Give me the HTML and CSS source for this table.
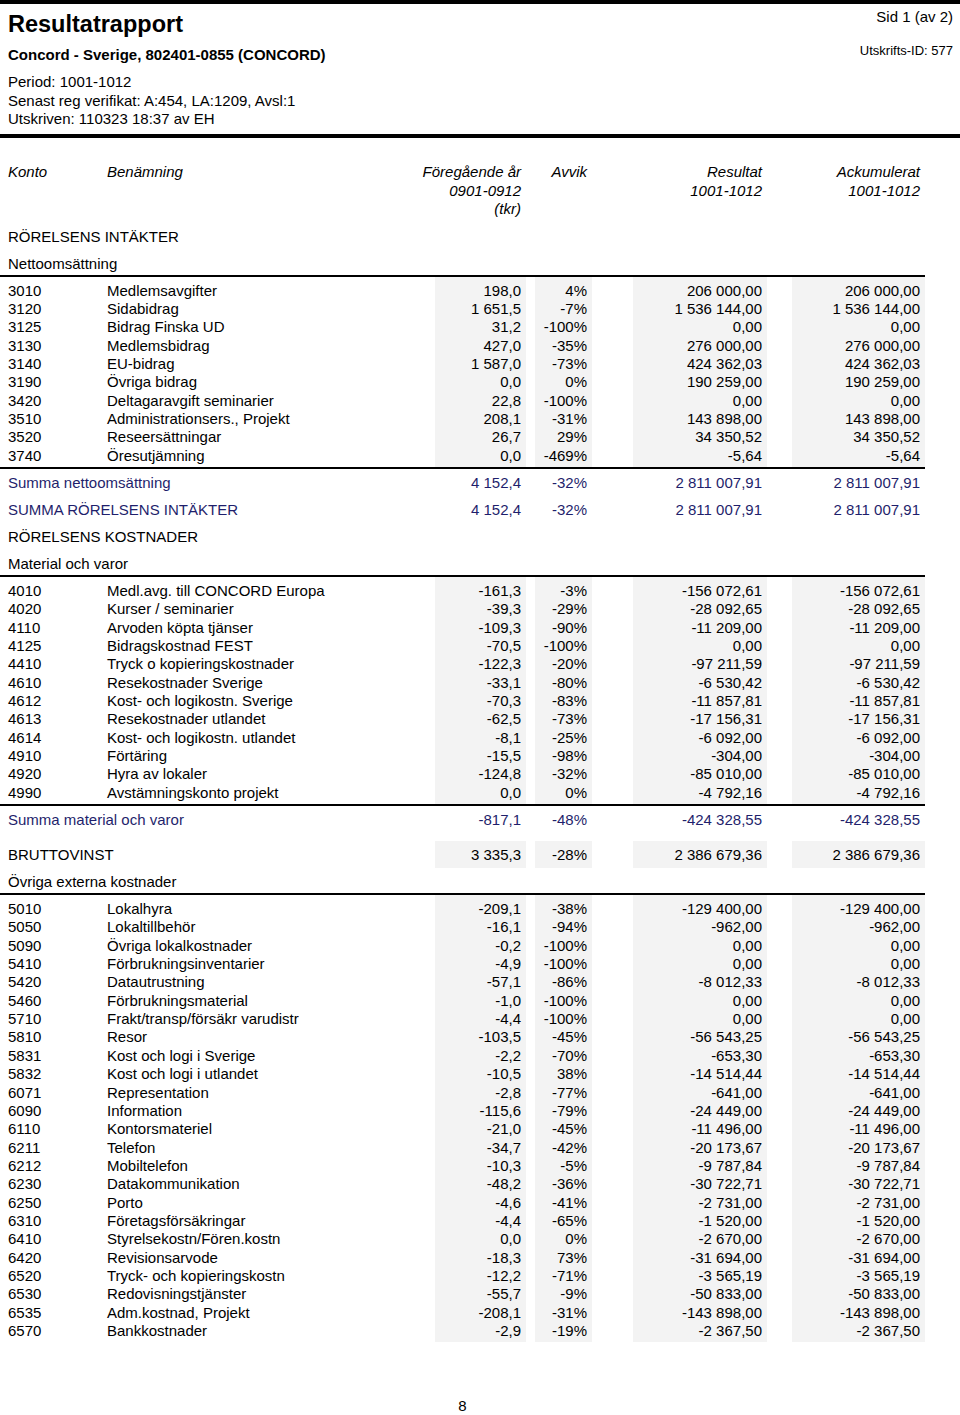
FILE: index.html
```html
<!DOCTYPE html>
<html lang="sv">
<head>
<meta charset="utf-8">
<title>Resultatrapport</title>
<link rel="stylesheet" href="styles.css">
</head>
<body>
<header class="masthead">
  <div class="mast-left">
    <h1 class="title">Resultatrapport</h1>
    <div class="company">Concord - Sverige, 802401-0855 (CONCORD)</div>
    <div class="meta">
      <div>Period: 1001-1012</div>
      <div>Senast reg verifikat: A:454, LA:1209, Avsl:1</div>
      <div>Utskriven: 110323 18:37 av EH</div>
    </div>
  </div>
  <div class="mast-right">
    <div class="pageno">Sid 1 (av 2)</div>
    <div class="printid">Utskrifts-ID: 577</div>
  </div>
</header>

<main class="report">
  <div class="row colhead">
    <div class="k">Konto</div>
    <div class="n">Benämning</div>
    <div class="p num"><span>Föregående år</span><span>0901-0912</span><span>(tkr)</span></div>
    <div class="a num"><span>Avvik</span></div>
    <div class="r num"><span>Resultat</span><span>1001-1012</span></div>
    <div class="c num"><span>Ackumulerat</span><span>1001-1012</span></div>
  </div>

  <div class="row line"><div class="label">RÖRELSENS INTÄKTER</div></div>
  <div class="row line ruled"><div class="label">Nettoomsättning</div></div>

  <div class="data">
    <div class="row"><div class="k">3010</div><div class="n">Medlemsavgifter</div><div class="p num">198,0</div><div class="a num">4%</div><div class="r num">206 000,00</div><div class="c num">206 000,00</div></div>
    <div class="row"><div class="k">3120</div><div class="n">Sidabidrag</div><div class="p num">1 651,5</div><div class="a num">-7%</div><div class="r num">1 536 144,00</div><div class="c num">1 536 144,00</div></div>
    <div class="row"><div class="k">3125</div><div class="n">Bidrag Finska UD</div><div class="p num">31,2</div><div class="a num">-100%</div><div class="r num">0,00</div><div class="c num">0,00</div></div>
    <div class="row"><div class="k">3130</div><div class="n">Medlemsbidrag</div><div class="p num">427,0</div><div class="a num">-35%</div><div class="r num">276 000,00</div><div class="c num">276 000,00</div></div>
    <div class="row"><div class="k">3140</div><div class="n">EU-bidrag</div><div class="p num">1 587,0</div><div class="a num">-73%</div><div class="r num">424 362,03</div><div class="c num">424 362,03</div></div>
    <div class="row"><div class="k">3190</div><div class="n">Övriga bidrag</div><div class="p num">0,0</div><div class="a num">0%</div><div class="r num">190 259,00</div><div class="c num">190 259,00</div></div>
    <div class="row"><div class="k">3420</div><div class="n">Deltagaravgift seminarier</div><div class="p num">22,8</div><div class="a num">-100%</div><div class="r num">0,00</div><div class="c num">0,00</div></div>
    <div class="row"><div class="k">3510</div><div class="n">Administrationsers., Projekt</div><div class="p num">208,1</div><div class="a num">-31%</div><div class="r num">143 898,00</div><div class="c num">143 898,00</div></div>
    <div class="row"><div class="k">3520</div><div class="n">Reseersättningar</div><div class="p num">26,7</div><div class="a num">29%</div><div class="r num">34 350,52</div><div class="c num">34 350,52</div></div>
    <div class="row"><div class="k">3740</div><div class="n">Öresutjämning</div><div class="p num">0,0</div><div class="a num">-469%</div><div class="r num">-5,64</div><div class="c num">-5,64</div></div>
  </div>

  <div class="row line sum"><div class="label">Summa nettoomsättning</div><div class="p num">4 152,4</div><div class="a num">-32%</div><div class="r num">2 811 007,91</div><div class="c num">2 811 007,91</div></div>
  <div class="row line sum"><div class="label">SUMMA RÖRELSENS INTÄKTER</div><div class="p num">4 152,4</div><div class="a num">-32%</div><div class="r num">2 811 007,91</div><div class="c num">2 811 007,91</div></div>
  <div class="row line"><div class="label">RÖRELSENS KOSTNADER</div></div>
  <div class="row line ruled"><div class="label">Material och varor</div></div>

  <div class="data">
    <div class="row"><div class="k">4010</div><div class="n">Medl.avg. till CONCORD Europa</div><div class="p num">-161,3</div><div class="a num">-3%</div><div class="r num">-156 072,61</div><div class="c num">-156 072,61</div></div>
    <div class="row"><div class="k">4020</div><div class="n">Kurser / seminarier</div><div class="p num">-39,3</div><div class="a num">-29%</div><div class="r num">-28 092,65</div><div class="c num">-28 092,65</div></div>
    <div class="row"><div class="k">4110</div><div class="n">Arvoden köpta tjänser</div><div class="p num">-109,3</div><div class="a num">-90%</div><div class="r num">-11 209,00</div><div class="c num">-11 209,00</div></div>
    <div class="row"><div class="k">4125</div><div class="n">Bidragskostnad FEST</div><div class="p num">-70,5</div><div class="a num">-100%</div><div class="r num">0,00</div><div class="c num">0,00</div></div>
    <div class="row"><div class="k">4410</div><div class="n">Tryck o kopieringskostnader</div><div class="p num">-122,3</div><div class="a num">-20%</div><div class="r num">-97 211,59</div><div class="c num">-97 211,59</div></div>
    <div class="row"><div class="k">4610</div><div class="n">Resekostnader Sverige</div><div class="p num">-33,1</div><div class="a num">-80%</div><div class="r num">-6 530,42</div><div class="c num">-6 530,42</div></div>
    <div class="row"><div class="k">4612</div><div class="n">Kost- och logikostn. Sverige</div><div class="p num">-70,3</div><div class="a num">-83%</div><div class="r num">-11 857,81</div><div class="c num">-11 857,81</div></div>
    <div class="row"><div class="k">4613</div><div class="n">Resekostnader utlandet</div><div class="p num">-62,5</div><div class="a num">-73%</div><div class="r num">-17 156,31</div><div class="c num">-17 156,31</div></div>
    <div class="row"><div class="k">4614</div><div class="n">Kost- och logikostn. utlandet</div><div class="p num">-8,1</div><div class="a num">-25%</div><div class="r num">-6 092,00</div><div class="c num">-6 092,00</div></div>
    <div class="row"><div class="k">4910</div><div class="n">Förtäring</div><div class="p num">-15,5</div><div class="a num">-98%</div><div class="r num">-304,00</div><div class="c num">-304,00</div></div>
    <div class="row"><div class="k">4920</div><div class="n">Hyra av lokaler</div><div class="p num">-124,8</div><div class="a num">-32%</div><div class="r num">-85 010,00</div><div class="c num">-85 010,00</div></div>
    <div class="row"><div class="k">4990</div><div class="n">Avstämningskonto projekt</div><div class="p num">0,0</div><div class="a num">0%</div><div class="r num">-4 792,16</div><div class="c num">-4 792,16</div></div>
  </div>

  <div class="row line sum"><div class="label">Summa material och varor</div><div class="p num">-817,1</div><div class="a num">-48%</div><div class="r num">-424 328,55</div><div class="c num">-424 328,55</div></div>
  <div class="row line gross"><div class="label">BRUTTOVINST</div><div class="p num">3 335,3</div><div class="a num">-28%</div><div class="r num">2 386 679,36</div><div class="c num">2 386 679,36</div></div>
  <div class="row line ruled"><div class="label">Övriga externa kostnader</div></div>

  <div class="data open">
    <div class="row"><div class="k">5010</div><div class="n">Lokalhyra</div><div class="p num">-209,1</div><div class="a num">-38%</div><div class="r num">-129 400,00</div><div class="c num">-129 400,00</div></div>
    <div class="row"><div class="k">5050</div><div class="n">Lokaltillbehör</div><div class="p num">-16,1</div><div class="a num">-94%</div><div class="r num">-962,00</div><div class="c num">-962,00</div></div>
    <div class="row"><div class="k">5090</div><div class="n">Övriga lokalkostnader</div><div class="p num">-0,2</div><div class="a num">-100%</div><div class="r num">0,00</div><div class="c num">0,00</div></div>
    <div class="row"><div class="k">5410</div><div class="n">Förbrukningsinventarier</div><div class="p num">-4,9</div><div class="a num">-100%</div><div class="r num">0,00</div><div class="c num">0,00</div></div>
    <div class="row"><div class="k">5420</div><div class="n">Datautrustning</div><div class="p num">-57,1</div><div class="a num">-86%</div><div class="r num">-8 012,33</div><div class="c num">-8 012,33</div></div>
    <div class="row"><div class="k">5460</div><div class="n">Förbrukningsmaterial</div><div class="p num">-1,0</div><div class="a num">-100%</div><div class="r num">0,00</div><div class="c num">0,00</div></div>
    <div class="row"><div class="k">5710</div><div class="n">Frakt/transp/försäkr varudistr</div><div class="p num">-4,4</div><div class="a num">-100%</div><div class="r num">0,00</div><div class="c num">0,00</div></div>
    <div class="row"><div class="k">5810</div><div class="n">Resor</div><div class="p num">-103,5</div><div class="a num">-45%</div><div class="r num">-56 543,25</div><div class="c num">-56 543,25</div></div>
    <div class="row"><div class="k">5831</div><div class="n">Kost och logi i Sverige</div><div class="p num">-2,2</div><div class="a num">-70%</div><div class="r num">-653,30</div><div class="c num">-653,30</div></div>
    <div class="row"><div class="k">5832</div><div class="n">Kost och logi i utlandet</div><div class="p num">-10,5</div><div class="a num">38%</div><div class="r num">-14 514,44</div><div class="c num">-14 514,44</div></div>
    <div class="row"><div class="k">6071</div><div class="n">Representation</div><div class="p num">-2,8</div><div class="a num">-77%</div><div class="r num">-641,00</div><div class="c num">-641,00</div></div>
    <div class="row"><div class="k">6090</div><div class="n">Information</div><div class="p num">-115,6</div><div class="a num">-79%</div><div class="r num">-24 449,00</div><div class="c num">-24 449,00</div></div>
    <div class="row"><div class="k">6110</div><div class="n">Kontorsmateriel</div><div class="p num">-21,0</div><div class="a num">-45%</div><div class="r num">-11 496,00</div><div class="c num">-11 496,00</div></div>
    <div class="row"><div class="k">6211</div><div class="n">Telefon</div><div class="p num">-34,7</div><div class="a num">-42%</div><div class="r num">-20 173,67</div><div class="c num">-20 173,67</div></div>
    <div class="row"><div class="k">6212</div><div class="n">Mobiltelefon</div><div class="p num">-10,3</div><div class="a num">-5%</div><div class="r num">-9 787,84</div><div class="c num">-9 787,84</div></div>
    <div class="row"><div class="k">6230</div><div class="n">Datakommunikation</div><div class="p num">-48,2</div><div class="a num">-36%</div><div class="r num">-30 722,71</div><div class="c num">-30 722,71</div></div>
    <div class="row"><div class="k">6250</div><div class="n">Porto</div><div class="p num">-4,6</div><div class="a num">-41%</div><div class="r num">-2 731,00</div><div class="c num">-2 731,00</div></div>
    <div class="row"><div class="k">6310</div><div class="n">Företagsförsäkringar</div><div class="p num">-4,4</div><div class="a num">-65%</div><div class="r num">-1 520,00</div><div class="c num">-1 520,00</div></div>
    <div class="row"><div class="k">6410</div><div class="n">Styrelsekostn/Fören.kostn</div><div class="p num">0,0</div><div class="a num">0%</div><div class="r num">-2 670,00</div><div class="c num">-2 670,00</div></div>
    <div class="row"><div class="k">6420</div><div class="n">Revisionsarvode</div><div class="p num">-18,3</div><div class="a num">73%</div><div class="r num">-31 694,00</div><div class="c num">-31 694,00</div></div>
    <div class="row"><div class="k">6520</div><div class="n">Tryck- och kopieringskostn</div><div class="p num">-12,2</div><div class="a num">-71%</div><div class="r num">-3 565,19</div><div class="c num">-3 565,19</div></div>
    <div class="row"><div class="k">6530</div><div class="n">Redovisningstjänster</div><div class="p num">-55,7</div><div class="a num">-9%</div><div class="r num">-50 833,00</div><div class="c num">-50 833,00</div></div>
    <div class="row"><div class="k">6535</div><div class="n">Adm.kostnad, Projekt</div><div class="p num">-208,1</div><div class="a num">-31%</div><div class="r num">-143 898,00</div><div class="c num">-143 898,00</div></div>
    <div class="row"><div class="k">6570</div><div class="n">Bankkostnader</div><div class="p num">-2,9</div><div class="a num">-19%</div><div class="r num">-2 367,50</div><div class="c num">-2 367,50</div></div>
  </div>

  <footer class="footer">8</footer>
</main>
</body>
</html>
```

FILE: styles.css
```css
html, body {
  margin: 0;
  padding: 0;
  background: #fff;
}

body {
  font-family: "Liberation Sans", Arial, sans-serif;
  font-size: 15px;
  color: #000;
}

/* ---------- masthead ---------- */
.masthead {
  height: 130px;
  border-top: 4px solid #000;
  border-bottom: 4px solid #000;
  display: flex;
  justify-content: space-between;
  padding: 0 7px 0 8px;
}

.title {
  margin: 5px 0 0;
  font-size: 23.5px;
  line-height: 30px;
  font-weight: bold;
}

.company {
  margin-top: 6px;
  font-weight: bold;
  line-height: 20px;
}

.meta {
  margin-top: 8px;
  line-height: 18.5px;
}

.mast-right {
  text-align: right;
}

.pageno {
  margin-top: 4px;
  line-height: 18px;
}

.printid {
  margin-top: 16px;
  line-height: 18px;
  font-size: 13px;
}

/* ---------- report grid ---------- */
.report {
  width: 925px;
}

.row {
  display: grid;
  grid-template-columns: 107px 328px 91px 9px 57px 41px 134px 25px 133px;
}

.k { grid-column: 1; padding-left: 8px; }
.n { grid-column: 2; white-space: nowrap; }
.p { grid-column: 3; }
.a { grid-column: 5; }
.r { grid-column: 7; }
.c { grid-column: 9; }

.label {
  grid-column: 1 / 3;
  padding-left: 8px;
  white-space: nowrap;
}

.num {
  text-align: right;
  padding-right: 5px;
  white-space: nowrap;
}

/* column headings */
.colhead {
  padding: 25px 0 4px;
  font-style: italic;
  line-height: 18.5px;
}

.colhead .num {
  display: flex;
  flex-direction: column;
  align-items: flex-end;
}

/* heading / summary lines */
.line {
  padding: 3px 0 2px;
  line-height: 22px;
}

.line.ruled {
  padding-bottom: 0;
  border-bottom: 2px solid #000;
}

.sum {
  color: #1f1f6c;
}

.gross {
  margin-top: 8px;
  padding: 0;
}

.gross > * {
  padding-top: 3px;
  padding-bottom: 2px;
}

.gross .num {
  background: #f3f3f3;
}

/* account rows */
.data {
  border-bottom: 2px solid #000;
}

.data.open {
  border-bottom: none;
}

.data .row {
  line-height: 18.35px;
}

.data .num {
  background: #f3f3f3;
}

.data .row:first-child > * {
  padding-top: 5px;
}

.data .row:last-child > * {
  padding-bottom: 2px;
}

.footer {
  margin-top: 56px;
  line-height: 16px;
  text-align: center;
}
```
